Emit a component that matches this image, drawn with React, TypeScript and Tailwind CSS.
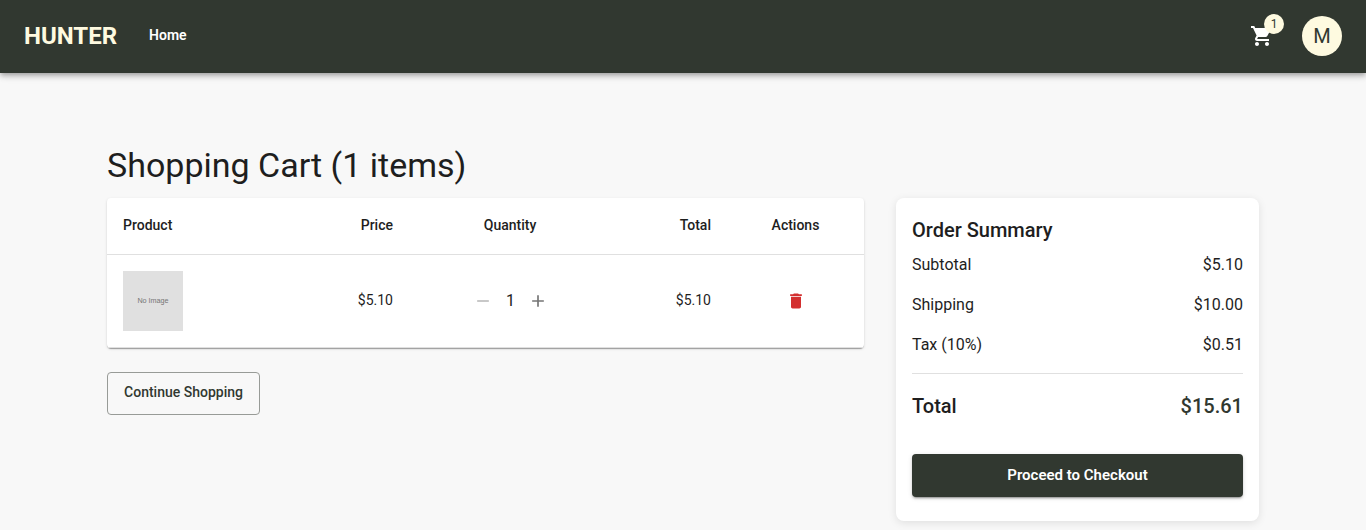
import { MdShoppingCart, MdDelete, MdAdd, MdRemove } from "react-icons/md";

function SummaryRow({ label, value }: { label: string; value: string }) {
  return (
    <div className="mb-4 flex justify-between text-base leading-6">
      <span>{label}</span>
      <span>{value}</span>
    </div>
  );
}

export default function App() {
  return (
    <div className="h-[530px] overflow-hidden bg-[#f8f8f8] font-['Roboto',sans-serif] text-[#1e1e1e]">
      <header className="relative flex h-[73px] items-center bg-[#313830] px-6 pb-px text-white shadow-[0_2px_4px_-1px_rgba(0,0,0,0.2),0_4px_5px_0_rgba(0,0,0,0.14),0_1px_10px_0_rgba(0,0,0,0.12)]">
        <div className="text-2xl font-bold text-[#fefae0]">HUNTER</div>
        <nav className="ml-8 pb-0.5 text-sm font-semibold">Home</nav>
        <div className="relative ml-auto mr-7">
          <MdShoppingCart className="size-6" />
          <span className="absolute -top-[10px] left-[14px] flex size-5 items-center justify-center rounded-full bg-[#fefae0] text-xs text-[#313830]">1</span>
        </div>
        <div className="flex size-10 items-center justify-center rounded-full bg-[#fefae0] text-xl text-[#313830]">M</div>
      </header>
      <main className="mx-auto w-[1152px] pt-[71px]">
        <h1 className="mb-3 text-[34px] leading-[42px]">Shopping Cart (1 items)</h1>
        <div className="flex items-start gap-8">
          <div className="w-[757px]">
            <table className="w-full table-fixed border-separate border-spacing-0 rounded bg-white text-sm shadow-[0_2px_1px_-1px_rgba(0,0,0,0.2),0_1px_1px_0_rgba(0,0,0,0.14),0_1px_3px_0_rgba(0,0,0,0.12)]">
              <thead>
                <tr className="h-[57px] *:border-b *:border-[#e0e0e0] *:pt-0 *:pb-[3px]">
                  <th className="w-[180px] px-4 text-left font-medium">Product</th>
                  <th className="w-[122px] px-4 text-right font-medium">Price</th>
                  <th className="w-[202px] px-4 text-center font-medium">Quantity</th>
                  <th className="w-[116px] px-4 text-right font-medium">Total</th>
                  <th className="px-4 text-center font-medium">Actions</th>
                </tr>
              </thead>
              <tbody>
                <tr className="h-[93px] *:border-b *:border-[#e0e0e0]">
                  <td className="px-4">
                    <div className="flex size-[60px] items-center justify-center bg-[#e0e0e0] font-['Liberation_Sans',sans-serif] text-[7.2px] text-[#757575]">No Image</div>
                  </td>
                  <td className="px-4 pb-0.5 text-right">$5.10</td>
                  <td className="px-4">
                    <div className="flex items-center justify-center text-base">
                      <MdRemove className="size-5 text-[#bdbdbd]" />
                      <span className="mr-[7px] ml-2 w-5 text-center">1</span>
                      <MdAdd className="size-5 text-[#757575]" />
                    </div>
                  </td>
                  <td className="px-4 pb-0.5 text-right">$5.10</td>
                  <td className="px-4"><MdDelete className="mx-auto size-5 text-[#d32f2f]" /></td>
                </tr>
              </tbody>
            </table>
            <button className="mt-6 h-[43px] w-[153px] rounded border border-[#989b97] pb-[3px] text-sm font-medium text-[#313830]">Continue Shopping</button>
          </div>
          <aside className="h-[323px] w-[363px] rounded-lg bg-white px-4 pt-4 shadow-[0_2px_8px_rgba(0,0,0,0.1)]">
            <h2 className="mb-1 text-xl leading-8 font-medium">Order Summary</h2>
            <div className="pt-[3px]">
              <SummaryRow label="Subtotal" value="$5.10" />
              <SummaryRow label="Shipping" value="$10.00" />
              <SummaryRow label="Tax (10%)" value="$0.51" />
            </div>
            <div className="border-t border-[#e0e0e0]" />
            <div className="mt-4 mb-8 flex justify-between text-xl leading-8 font-medium">
              <span>Total</span><span className="text-[#313830]">$15.61</span>
            </div>
            <button className="h-[43px] w-full rounded bg-[#313830] pb-px text-[15px] font-semibold text-white shadow-[0_3px_1px_-2px_rgba(0,0,0,0.2),0_2px_2px_0_rgba(0,0,0,0.14),0_1px_5px_0_rgba(0,0,0,0.12)]">Proceed to Checkout</button>
          </aside>
        </div>
      </main>
    </div>
  );
}
